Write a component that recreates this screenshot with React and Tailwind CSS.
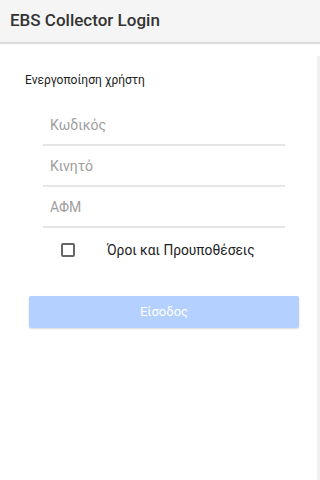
import React from "react";

const Field = ({ placeholder }) => (
  <div className="border-b-2 border-[#e6e6e6]">
    <input
      placeholder={placeholder}
      className="w-full h-[39px] px-[7px] text-[14px] text-[#333] placeholder:text-[#9e9e9e] bg-transparent outline-none"
    />
  </div>
);

const App = () => {
  return (
    <div className="w-[320px] h-[480px] bg-white flex flex-col font-['Roboto',sans-serif] overflow-hidden">
      <header className="h-[44px] shrink-0 bg-[#f5f5f5] border-b-2 border-[#dcdcdc] flex items-center px-[10px]">
        <h1 className="text-[17px] font-medium text-[#333]">EBS Collector Login</h1>
      </header>
      <div className="flex flex-1">
        <main className="flex-1">
          <p className="ml-[25px] mt-[27px] text-[12px] text-[#222]">
            Ενεργοποίηση χρήστη
          </p>
          <div className="ml-[43px] mt-[16px] w-[242px]">
            <Field placeholder="Κωδικός" />
            <Field placeholder="Κινητό" />
            <Field placeholder="ΑΦΜ" />
          </div>
          <label className="flex items-center mt-[12px] ml-[61px] gap-[32px]">
            <span className="w-[14px] h-[14px] border-2 border-[#666] rounded-[2px]" />
            <span className="text-[13.75px] text-[#222]">Όροι και Προυποθέσεις</span>
          </label>
          <button className="mt-[35px] ml-[29px] w-[270px] h-[32px] bg-[#b3d0ff] text-white text-[13px] rounded-[2px] shadow-[0_1px_2px_rgba(0,0,0,0.15)]">
            Είσοδος
          </button>
        </main>
        <div className="w-[3px] mt-[12px] bg-[#f0f0f0]" />
      </div>
    </div>
  );
};

export default App;
